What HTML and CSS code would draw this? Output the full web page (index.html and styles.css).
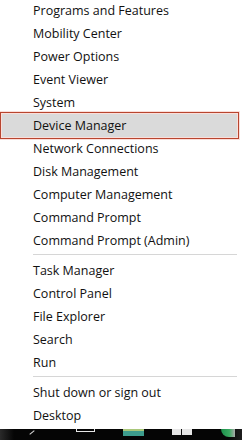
FILE: index.html
```html
<!DOCTYPE html>
<html lang="en">
<head>
    <meta charset="UTF-8">
    <title>Quick Link Menu</title>
    <link rel="stylesheet" href="styles.css">
</head>
<body>
    <div class="menu">
        <div class="group">
            <div class="item">Programs and Features</div>
            <div class="item">Mobility Center</div>
            <div class="item">Power Options</div>
            <div class="item">Event Viewer</div>
            <div class="item">System</div>
            <div class="item selected">Device Manager</div>
            <div class="item">Network Connections</div>
            <div class="item">Disk Management</div>
            <div class="item">Computer Management</div>
            <div class="item">Command Prompt</div>
            <div class="item">Command Prompt (Admin)</div>
        </div>
        <div class="separator"></div>
        <div class="group">
            <div class="item">Task Manager</div>
            <div class="item">Control Panel</div>
            <div class="item">File Explorer</div>
            <div class="item">Search</div>
            <div class="item">Run</div>
        </div>
        <div class="separator"></div>
        <div class="group">
            <div class="item">Shut down or sign out</div>
            <div class="item">Desktop</div>
        </div>
    </div>
    <div class="taskbar">
        <span class="tb-search"></span>
        <span class="tb-view"></span>
        <span class="tb-store"></span>
        <span class="tb-win"></span>
        <span class="tb-green"></span>
    </div>
</body>
</html>
```

FILE: styles.css
```css
body {
    margin: 0;
    padding: 0;
    background-color: #fff;
    font-family: "Open Sans", "Noto Sans", Arial, sans-serif;
    font-size: 12.5px;
    color: #111;
    overflow: hidden;
}
.menu {
    height: 431px;
    margin-top: -1px;
    padding-right: 5px;
}
.item {
    height: 23px;
    line-height: 23px;
    padding-left: 33px;
    white-space: nowrap;
}
.item.selected {
    background-color: #dadada;
    outline: 1px solid #b8452f;
    outline-offset: 1px;
    box-shadow: 0 0 0 3px rgba(240, 160, 150, 0.35);
    margin-left: 2px;
    padding-left: 31px;
}
.separator {
    height: 1px;
    background-color: #d6d6d6;
    margin: 2px 0 4px 33px;
}
.taskbar {
    height: 11px;
    margin-top: -1px;
    background: linear-gradient(to right, #2a2a2a 0, #050505 14px, #050505 228px, #1e1e1e 100%);
    display: flex;
    align-items: flex-start;
}
.tb-search {
    width: 6px;
    height: 1px;
    background-color: #ddd;
    transform: rotate(-40deg);
    margin: 3px 0 0 29px;
}
.tb-view {
    width: 17px;
    height: 2px;
    border: 1px solid #e6e6e6;
    border-top: none;
    margin: 0 0 0 41px;
}
.tb-store {
    width: 21px;
    height: 5px;
    background-color: #3d9c8d;
    border-top: 2px solid #a9c77a;
    margin: 0 0 0 28px;
}
.tb-win {
    width: 20px;
    height: 6px;
    background: linear-gradient(to right, #fff 0, #fff 9px, #111 9px, #111 10px, #fff 10px);
    margin: 0 0 0 28px;
    opacity: 0.9;
}
.tb-green {
    width: 14px;
    height: 8px;
    background: linear-gradient(to right, #1b8f4a, #3aa860 60%, #aaa);
    border-radius: 0 0 0 8px;
    margin: 0 0 0 29px;
}
```
